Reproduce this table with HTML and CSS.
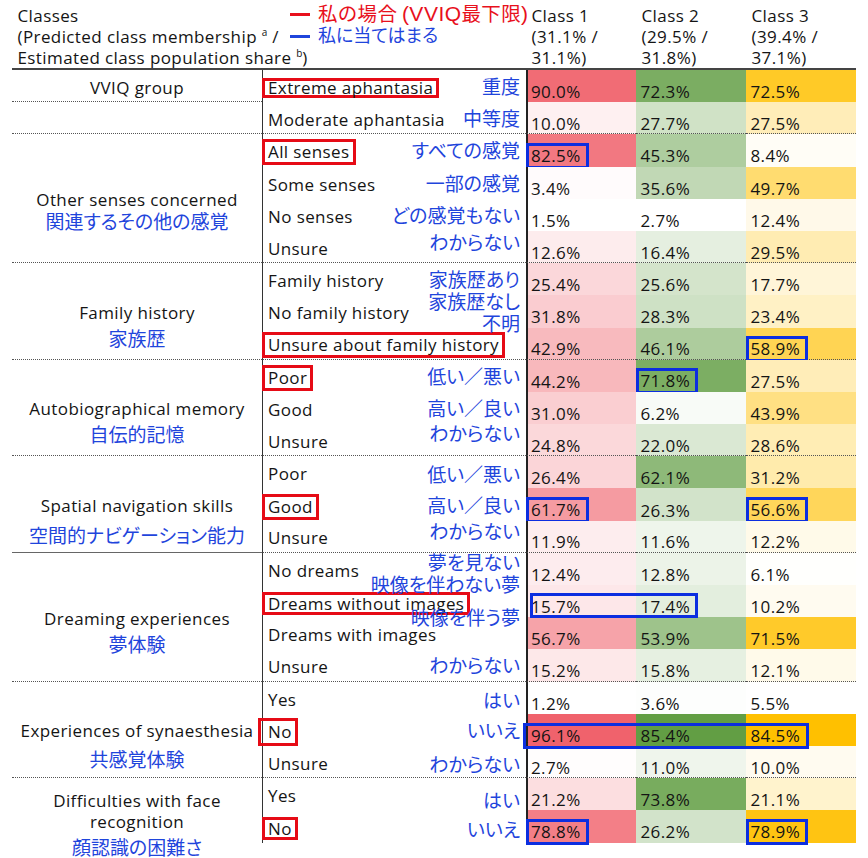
FILE: index.html
```html
<!DOCTYPE html>
<html lang="ja">
<head>
<meta charset="utf-8">
<title>Classes</title>
<link rel="stylesheet" href="styles.css">
</head>
<body>
<div class="page">
  <div class="head">
    <div class="head-main">
      Classes<br>
      (Predicted class membership <sup>a</sup> /<br>
      Estimated class population share <sup>b</sup>)
      <div class="legend">
        <div class="lg lg-red"><span class="dash"></span>私の場合 <span class="lat">(VVIQ</span>最下限<span class="lat">)</span></div>
        <div class="lg lg-blue"><span class="dash"></span>私に当てはまる</div>
      </div>
    </div>
    <div class="head-cls">Class 1<br>(31.1% /<br>31.1%)</div>
    <div class="head-cls">Class 2<br>(29.5% /<br>31.8%)</div>
    <div class="head-cls">Class 3<br>(39.4% /<br>37.1%)</div>
  </div>

  <div class="tbl">
    <!-- VVIQ group -->
    <div class="grp"><div class="gen">VVIQ group</div></div>
    <div class="opt"><span class="en"><span class="rb sm">Extreme aphantasia</span></span><span class="jp ja">重度</span></div>
    <div class="v c1">90.0%</div><div class="v c2">72.3%</div><div class="v c3">72.5%</div>
    <div class="grp"></div>
    <div class="opt end"><span class="en">Moderate aphantasia</span><span class="jp ja">中等度</span></div>
    <div class="v c1 end">10.0%</div><div class="v c2 end">27.7%</div><div class="v c3 end">27.5%</div>

    <!-- Other senses -->
    <div class="grp r4"><div class="gen">Other senses concerned</div><div class="jpw"><div class="jpl ja o-m4">関連するその他の感覚</div></div></div>
    <div class="opt"><span class="en"><span class="rb">All senses</span></span><span class="jp ja">すべての感覚</span></div>
    <div class="v c1"><span class="bb">82.5%</span></div><div class="v c2">45.3%</div><div class="v c3">8.4%</div>
    <div class="opt"><span class="en">Some senses</span><span class="jp ja">一部の感覚</span></div>
    <div class="v c1">3.4%</div><div class="v c2">35.6%</div><div class="v c3">49.7%</div>
    <div class="opt"><span class="en">No senses</span><span class="jp ja">どの感覚もない</span></div>
    <div class="v c1">1.5%</div><div class="v c2">2.7%</div><div class="v c3">12.4%</div>
    <div class="opt end"><span class="en">Unsure</span><span class="jp ja sh-m4">わからない</span></div>
    <div class="v c1 end">12.6%</div><div class="v c2 end">16.4%</div><div class="v c3 end">29.5%</div>

    <!-- Family history -->
    <div class="grp r3"><div class="gen">Family history</div><div class="jpw"><div class="jpl ja">家族歴</div></div></div>
    <div class="opt"><span class="en">Family history</span><span class="jp ja">家族歴あり</span></div>
    <div class="v c1">25.4%</div><div class="v c2">25.6%</div><div class="v c3">17.7%</div>
    <div class="opt"><span class="en">No family history</span><span class="jp ja sh-m9">家族歴なし</span></div>
    <div class="v c1">31.8%</div><div class="v c2">28.3%</div><div class="v c3">23.4%</div>
    <div class="opt end"><span class="en"><span class="rb">Unsure about family history</span></span><span class="jp ja sh-m19">不明</span></div>
    <div class="v c1 end">42.9%</div><div class="v c2 end">46.1%</div><div class="v c3 end"><span class="bb">58.9%</span></div>

    <!-- Autobiographical memory -->
    <div class="grp r3"><div class="gen">Autobiographical memory</div><div class="jpw"><div class="jpl ja">自伝的記憶</div></div></div>
    <div class="opt"><span class="en"><span class="rb">Poor</span></span><span class="jp ja">低い／悪い</span></div>
    <div class="v c1">44.2%</div><div class="v c2"><span class="bb">71.8%</span></div><div class="v c3">27.5%</div>
    <div class="opt"><span class="en">Good</span><span class="jp ja">高い／良い</span></div>
    <div class="v c1">31.0%</div><div class="v c2">6.2%</div><div class="v c3">43.9%</div>
    <div class="opt end"><span class="en">Unsure</span><span class="jp ja sh-m6">わからない</span></div>
    <div class="v c1 end">24.8%</div><div class="v c2 end">22.0%</div><div class="v c3 end">28.6%</div>

    <!-- Spatial navigation -->
    <div class="grp r3 solid"><div class="gen">Spatial navigation skills</div><div class="jpw"><div class="jpl ja o-p4">空間的ナビゲーション能力</div></div></div>
    <div class="opt"><span class="en">Poor</span><span class="jp ja sh-p2">低い／悪い</span></div>
    <div class="v c1">26.4%</div><div class="v c2">62.1%</div><div class="v c3">31.2%</div>
    <div class="opt"><span class="en"><span class="rb">Good</span></span><span class="jp ja">高い／良い</span></div>
    <div class="v c1"><span class="bb">61.7%</span></div><div class="v c2">26.3%</div><div class="v c3"><span class="bb">56.6%</span></div>
    <div class="opt end"><span class="en">Unsure</span><span class="jp ja sh-m4">わからない</span></div>
    <div class="v c1 end">11.9%</div><div class="v c2 end">11.6%</div><div class="v c3 end">12.2%</div>

    <!-- Dreaming -->
    <div class="grp r4"><div class="gen">Dreaming experiences</div><div class="jpw"><div class="jpl ja">夢体験</div></div></div>
    <div class="opt"><span class="en">No dreams</span><span class="jp ja sh-m6">夢を見ない</span></div>
    <div class="v c1">12.4%</div><div class="v c2">12.8%</div><div class="v c3">6.1%</div>
    <div class="opt"><span class="en"><span class="rb md">Dreams without images</span></span><span class="jp ja sh-m16">映像を伴わない夢</span></div>
    <div class="v c1 rel">15.7%<div class="bspan bs-dream"></div></div><div class="v c2">17.4%</div><div class="v c3">10.2%</div>
    <div class="opt"><span class="en">Dreams with images</span><span class="jp ja sh-m15">映像を伴う夢</span></div>
    <div class="v c1">56.7%</div><div class="v c2">53.9%</div><div class="v c3">71.5%</div>
    <div class="opt end"><span class="en">Unsure</span><span class="jp ja">わからない</span></div>
    <div class="v c1 end">15.2%</div><div class="v c2 end">15.8%</div><div class="v c3 end">12.1%</div>

    <!-- Synaesthesia -->
    <div class="grp r3"><div class="gen">Experiences of synaesthesia</div><div class="jpw"><div class="jpl ja o-p3">共感覚体験</div></div></div>
    <div class="opt"><span class="en">Yes</span><span class="jp ja sh-p2">はい</span></div>
    <div class="v c1">1.2%</div><div class="v c2">3.6%</div><div class="v c3">5.5%</div>
    <div class="opt"><span class="en"><span class="rb wide">No</span></span><span class="jp ja">いいえ</span></div>
    <div class="v c1 rel">96.1%<div class="bspan bs-syn"></div></div><div class="v c2">85.4%</div><div class="v c3">84.5%</div>
    <div class="opt end"><span class="en">Unsure</span><span class="jp ja sh-p2">わからない</span></div>
    <div class="v c1 end">2.7%</div><div class="v c2 end">11.0%</div><div class="v c3 end">10.0%</div>

    <!-- Face recognition -->
    <div class="grp r2 last"><div class="gen two">Difficulties with face<br>recognition</div><div class="jpw"><div class="jpl ja">顔認識の困難さ</div></div></div>
    <div class="opt"><span class="en">Yes</span><span class="jp ja sh-p6">はい</span></div>
    <div class="v c1">21.2%</div><div class="v c2">73.8%</div><div class="v c3">21.1%</div>
    <div class="opt"><span class="en"><span class="rb md">No</span></span><span class="jp ja sh-p3">いいえ</span></div>
    <div class="v c1"><span class="bb">78.8%</span></div><div class="v c2">26.2%</div><div class="v c3"><span class="bb">78.9%</span></div>
  </div>
</div>
<script src="script.js"></script>
</body>
</html>
```

FILE: styles.css
```css
* { box-sizing: border-box; }

html, body {
  margin: 0;
  background: #ffffff;
}

body {
  font-family: "Open Sans", "Noto Sans CJK JP", sans-serif;
  font-size: 17px;
  letter-spacing: 0.4px;
  color: #141414;
}

.page {
  padding: 0 0 16px 12px;
  width: 856px;
}

/* ---------- header ---------- */
.head {
  display: grid;
  grid-template-columns: 514px 110px 110px 110px;
  border-bottom: 2px solid #444;
  line-height: 21px;
}

.head-main {
  position: relative;
  padding: 5px 0 0 5.5px;
  white-space: nowrap;
}

.head-main sup {
  font-size: 10px;
  line-height: 0;
  vertical-align: 7px;
  letter-spacing: 0;
}

.head-cls {
  padding: 5px 0 0 5.5px;
  white-space: nowrap;
}

.legend {
  position: absolute;
  left: 278px;
  top: 2px;
  width: 236px;
  font-family: "Noto Sans CJK JP", sans-serif;
  letter-spacing: 0;
  line-height: 21px;
}

.lg {
  display: block;
  white-space: nowrap;
}

.lg .dash {
  display: inline-block;
  width: 20px;
  height: 3px;
  margin-right: 8px;
  vertical-align: middle;
  position: relative;
  top: -1px;
}

.lg-red {
  color: #e8101c;
  font-size: 19.5px;
  letter-spacing: 0.3px;
}
.lg-red .dash { background: #e8101c; }

.lg-red .lat {
  font-family: "Liberation Sans", "Noto Sans", sans-serif;
  font-size: 21px;
  letter-spacing: 0.5px;
}

.lg-blue {
  color: #1f45dc;
  font-size: 18px;
  font-feature-settings: "palt";
}
.lg-blue .dash { background: #1f45dc; }

/* ---------- table body ---------- */
.tbl {
  display: grid;
  grid-template-columns: 250px 264px 110px 110px 110px;
  grid-auto-rows: 32.2px;
}

.ja {
  font-family: "Noto Sans CJK JP", sans-serif;
  font-size: 19px;
  letter-spacing: 0;
  color: #1f45dc;
  font-feature-settings: "palt";
}

.grp {
  grid-column: 1;
  display: flex;
  flex-direction: column;
  align-items: center;
  justify-content: center;
  text-align: center;
  padding-top: 3px;
  border-bottom: 1px dotted #555;
  line-height: 21px;
  white-space: nowrap;
}

.grp.r2 { grid-row: span 2; }
.grp.r3 { grid-row: span 3; }
.grp.r4 { grid-row: span 4; }
.grp.solid { border-bottom: 1px solid #666; }
.grp.last { border-bottom: 0; }

.gen.two { line-height: 20.5px; }

.jpw {
  height: 0;
  overflow: visible;
}

.jpl {
  position: relative;
  padding-top: 2px;
  line-height: 25px;
}

.jpl.o-m4 { top: -4px; }
.jpl.o-p3 { top: 3px; }
.jpl.o-p4 { top: 4px; }

.opt {
  grid-column: 2;
  display: grid;
  align-items: center;
  padding: 4px 6px 0 5px;
  border-left: 1px solid #333;
  line-height: 20px;
  white-space: nowrap;
}

.opt > span { grid-area: 1 / 1; }
.opt .en { justify-self: start; }
.opt .jp {
  justify-self: end;
  position: relative;
  top: -2px;
  line-height: 22px;
}

.jp.sh-m4 { top: -7px; }
.jp.sh-m6 { top: -9px; }
.jp.sh-m9 { top: -12px; }
.jp.sh-m15 { top: -18px; }
.jp.sh-m16 { top: -19px; }
.jp.sh-m19 { top: -22px; }
.jp.sh-p2 { top: 0; }
.jp.sh-p3 { top: 1px; }
.jp.sh-p6 { top: 4px; }

.end { border-bottom: 1px dotted #555; }

.v {
  display: flex;
  align-items: center;
  padding: 11px 0 0 4.5px;
  white-space: nowrap;
  background: #ffffff;
}

.v.c1 {
  border-left: 2px solid #222;
  padding-left: 3px;
}

.v.rel { position: relative; }

/* ---------- highlight boxes ---------- */
.rb {
  display: inline-block;
  border: 3px solid #e60b16;
  padding: 0 3px;
  margin-left: -6px;
  line-height: 20px;
}
.rb.sm { line-height: 14px; }
.rb.md { line-height: 17px; }
.rb.wide {
  line-height: 22px;
  margin-left: -10px;
  padding-left: 7px;
}

.bb {
  display: inline-block;
  border: 3px solid #0c2ee0;
  padding: 0 5px 0 2px;
  margin-left: -5px;
  line-height: 20px;
}

.bspan {
  position: absolute;
  z-index: 2;
  border: 3px solid #0c2ee0;
}

.bs-dream {
  left: 2px;
  top: 8px;
  width: 168px;
  height: 25px;
}

.bs-syn {
  left: -5px;
  top: 9px;
  width: 286px;
  height: 26px;
}
```

FILE: script.js
```js
(function () {
  var full = {
    c1: [240, 98, 108],
    c2: [98, 158, 68],
    c3: [255, 192, 0]
  };
  Object.keys(full).forEach(function (k) {
    var cells = Array.prototype.slice.call(document.querySelectorAll('.v.' + k));
    var vals = cells.map(function (c) { return parseFloat(c.textContent); });
    var mn = Math.min.apply(null, vals);
    var mx = Math.max.apply(null, vals);
    cells.forEach(function (c, i) {
      var t = (vals[i] - mn) / (mx - mn);
      var rgb = full[k].map(function (f) { return Math.round(255 + (f - 255) * t); });
      c.style.backgroundColor = 'rgb(' + rgb.join(',') + ')';
    });
  });
})();
```
